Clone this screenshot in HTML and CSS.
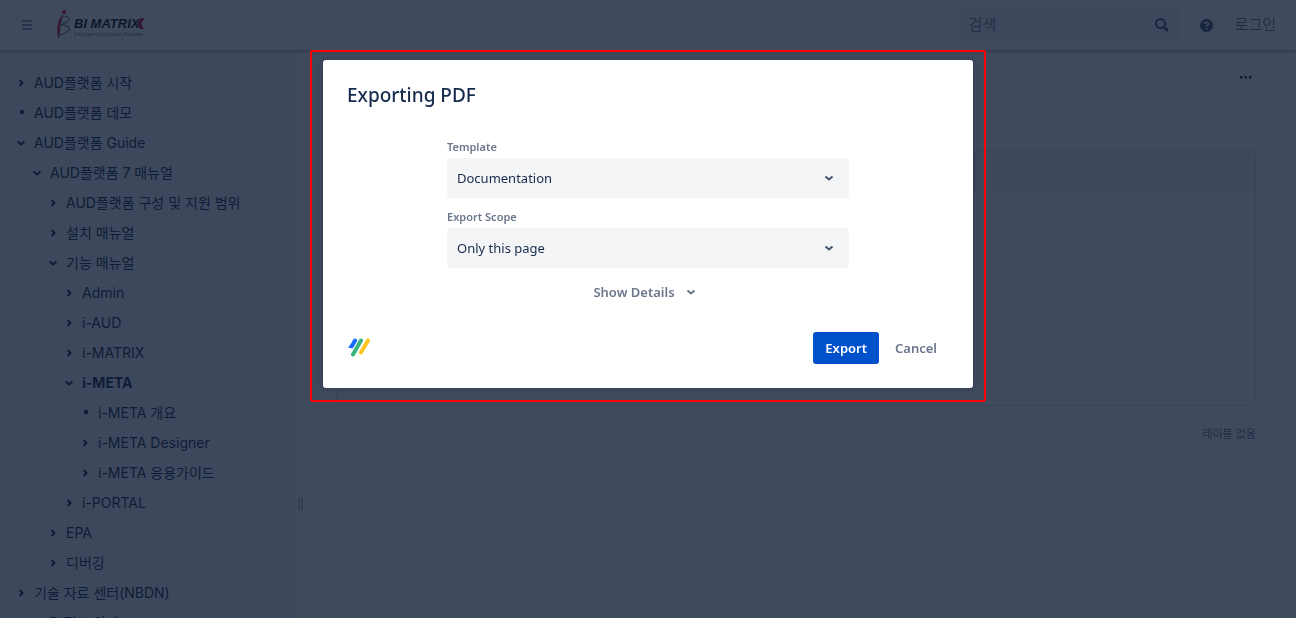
FILE: index.html
```html
<!DOCTYPE html>
<html lang="ko">
<head>
    <meta charset="UTF-8">
    <meta name="viewport" content="width=device-width, initial-scale=1.0">
    <title>i-META - BI MATRIX</title>
    <link rel="stylesheet" href="styles.css">
</head>
<body>
    <svg class="sprite" aria-hidden="true">
        <symbol id="right" viewBox="0 0 10 10"><path d="M3.5 2L6.5 5L3.5 8"/></symbol>
        <symbol id="down" viewBox="0 0 10 10"><path d="M1.500 3.500L5 6.500L8.500 3.500"/></symbol>
        <symbol id="dot" viewBox="0 0 10 10"><circle cx="6" cy="4" r="2.2"/></symbol>
    </svg>

    <header class="header">
        <button class="icon-button" type="button" aria-label="메뉴">
            <svg width="10" height="10" viewBox="0 0 10 10"><path d="M0 1H10M0 5H10M0 9H10" stroke="#6b778c" stroke-width="1.500"/></svg>
        </button>
        <a class="logo" href="#">
            <svg width="16" height="30" viewBox="0 0 16 30" fill="none">
                <circle cx="8" cy="2" r="2" fill="#c0102c"/>
                <path d="M7 5C2 10 1 18 2.500 28C4 20 3.500 12 7 5Z" fill="#c0102c" stroke="#c0102c"/>
                <path d="M6 6C11 6 16 8 11 12L5 15C12 15 16 18 11 22C8 24 4 25 1 26" stroke="#8a8f99" stroke-width="1.500"/>
            </svg>
            <span class="logo-text">
                <span class="logo-name">BI MATRIX<svg class="logo-mark" width="8" height="11" viewBox="0 0 8 11"><path d="M4 0H8L4 5.500L7 11H3L0 5.500Z" fill="#c0102c"/></svg></span>
                <span class="logo-slogan">Intelligence Solution Provider</span>
            </span>
        </a>
        <form class="search">
            <input class="search-input" type="search" placeholder="검색" aria-label="검색">
            <button class="icon-button" type="button" aria-label="검색">
                <svg width="14" height="14" viewBox="0 0 14 14" fill="none" stroke="#42526e" stroke-width="2"><circle cx="5.500" cy="5.500" r="4.500"/><path d="M9 9L13 13" stroke-width="2.500"/></svg>
            </button>
        </form>
        <button class="icon-button" type="button" aria-label="도움말">
            <svg width="13" height="13" viewBox="0 0 13 13"><circle cx="6.500" cy="6.500" r="6.500" fill="#42526e"/><path d="M4.500 5C4.500 2.500 8.500 2.500 8.500 5C8.500 6.300 6.500 6.300 6.500 7.800M6.500 9V10.500" fill="none" stroke="#fff" stroke-width="1.500"/></svg>
        </button>
        <a class="login" href="#">로그인</a>
    </header>

    <div class="page">
        <nav class="sidebar">
            <ul class="tree">
                <li><a href="#"><svg><use href="#right"/></svg>AUD플랫폼 시작</a></li>
                <li><a href="#"><svg><use href="#dot"/></svg>AUD플랫폼 데모</a></li>
                <li><a href="#"><svg><use href="#down"/></svg>AUD플랫폼 Guide</a>
                    <ul>
                        <li><a href="#"><svg><use href="#down"/></svg>AUD플랫폼 7 매뉴얼</a>
                            <ul>
                                <li><a href="#"><svg><use href="#right"/></svg>AUD플랫폼 구성 및 지원 범위</a></li>
                                <li><a href="#"><svg><use href="#right"/></svg>설치 매뉴얼</a></li>
                                <li><a href="#"><svg><use href="#down"/></svg>기능 매뉴얼</a>
                                    <ul>
                                        <li><a href="#"><svg><use href="#right"/></svg>Admin</a></li>
                                        <li><a href="#"><svg><use href="#right"/></svg>i-AUD</a></li>
                                        <li><a href="#"><svg><use href="#right"/></svg>i-MATRIX</a></li>
                                        <li><a class="current" href="#"><svg><use href="#down"/></svg>i-META</a>
                                            <ul>
                                                <li><a href="#"><svg><use href="#dot"/></svg>i-META 개요</a></li>
                                                <li><a href="#"><svg><use href="#right"/></svg>i-META Designer</a></li>
                                                <li><a href="#"><svg><use href="#right"/></svg>i-META 응용가이드</a></li>
                                            </ul>
                                        </li>
                                        <li><a href="#"><svg><use href="#right"/></svg>i-PORTAL</a></li>
                                    </ul>
                                </li>
                                <li><a href="#"><svg><use href="#right"/></svg>EPA</a></li>
                                <li><a href="#"><svg><use href="#right"/></svg>디버깅</a></li>
                            </ul>
                        </li>
                    </ul>
                </li>
                <li><a href="#"><svg><use href="#right"/></svg>기술 자료 센터(NBDN)</a></li>
                <li><a href="#"><svg><use href="#right"/></svg>교육 정보 안내</a></li>
            </ul>
        </nav>
        <div class="splitter"><span class="grip"></span></div>
        <main class="content">
            <button class="icon-button more" type="button" aria-label="더 보기">
                <svg width="12" height="3" viewBox="0 0 12 3" fill="#172b4d"><path d="M0 0H2.500V2.500H0ZM4.500 0H7V2.500H4.500ZM9 0H11.500V2.500H9Z"/></svg>
            </button>
            <section class="panel">
                <div class="panel-header"></div>
            </section>
            <p class="labels">레이블 없음</p>
        </main>
    </div>

    <div class="blanket">
        <div class="highlight">
            <form class="dialog" role="dialog" aria-labelledby="dialogTitle">
                <h1 class="dialog-title" id="dialogTitle">Exporting PDF</h1>
                <div class="fields">
                    <label class="field-label" for="template">Template</label>
                    <div class="select-wrap">
                        <select class="select" id="template">
                            <option>Documentation</option>
                        </select>
                        <svg class="chevron" width="10" height="10"><use href="#down"/></svg>
                    </div>
                    <label class="field-label" for="scope">Export Scope</label>
                    <div class="select-wrap">
                        <select class="select" id="scope">
                            <option>Only this page</option>
                        </select>
                        <svg class="chevron" width="10" height="10"><use href="#down"/></svg>
                    </div>
                    <button class="button details" type="button">Show Details <svg class="details-icon"><use href="#down"/></svg></button>
                </div>
                <div class="dialog-footer">
                    <svg class="vendor" width="24" height="20" viewBox="0 0 24 20" fill="none" stroke-linecap="round" stroke-width="4">
                        <path d="M8 2.500L5 8" stroke="#1769ff"/>
                        <path d="M1 9.500L4 6L6 10.500Z" fill="#1769ff"/>
                        <path d="M14 2.500L6 16.500" stroke="#36b37e"/>
                        <path d="M21 2.500L14 14.500" stroke="#ffc420"/>
                    </svg>
                    <button class="button primary" type="submit">Export</button>
                    <button class="button" type="button">Cancel</button>
                </div>
            </form>
        </div>
    </div>
</body>
</html>
```
FILE: styles.css
```css
* {
    box-sizing: border-box;
}

body {
    margin: 0;
    height: 100vh;
    overflow: hidden;
    display: flex;
    flex-direction: column;
    background-color: #fff;
    color: #172b4d;
    font: 14px/20px Inter, "Noto Sans CJK KR", sans-serif;
}

a {
    color: inherit;
    text-decoration: none;
}

button {
    font: inherit;
    border: 0;
    background: none;
    padding: 0;
}

.sprite {
    display: none;
}

.icon-button {
    display: flex;
}

/* header */

.header {
    display: flex;
    align-items: center;
    flex: none;
    height: 50px;
    padding: 0 20px 0 22px;
    box-shadow: 0 1px 4px rgba(0,0,0,0.4);
    z-index: 1;
}

.logo {
    display: flex;
    align-items: center;
    gap: 2px;
    margin: 0 auto 0 24px;
}

.logo-text {
    display: flex;
    flex-direction: column;
    padding-top: 4px;
}

.logo-name {
    display: flex;
    align-items: center;
    font: italic bold 13px/14px "Liberation Sans", sans-serif;
    color: #111;
}

.logo-mark {
    margin-left: -2px;
}

.logo-slogan {
    font: 5px/7px "Noto Sans", sans-serif;
    color: #6b778c;
}

.search {
    display: flex;
    align-items: center;
    width: 220px;
    height: 34px;
    margin-right: 21px;
    padding: 0 10px;
    border-radius: 3px;
    background-color: #f4f5f7;
}

.search-input {
    flex: 1;
    min-width: 0;
    border: 0;
    padding: 0;
    background: none;
    font: inherit;
    font-size: 15px;
}

.search-input::placeholder {
    color: #7a869a;
}

.login {
    margin-left: 22px;
    font-size: 15px;
    font-weight: 300;
    color: #42526e;
}

/* page tree */

.page {
    display: flex;
    flex: 1;
    min-height: 0;
}

.sidebar {
    flex: 0 0 296px;
    padding: 18px 16px;
    overflow: hidden;
    background-color: #f4f5f7;
}

.tree,
.tree ul {
    list-style: none;
    margin: 0;
    padding: 0;
}

.tree ul {
    padding-left: 16px;
}

.tree a {
    display: flex;
    align-items: center;
    gap: 8px;
    height: 30px;
    white-space: nowrap;
}

.tree svg {
    width: 10px;
    height: 10px;
}

.tree .current {
    font-weight: bold;
}

#right path,
#down path {
    fill: none;
    stroke: currentColor;
    stroke-width: 2;
}

#dot {
    fill: currentColor;
}

.splitter {
    display: flex;
    align-items: flex-start;
    flex: 0 0 10px;
    padding: 448px 2px 0;
}

.grip {
    width: 5px;
    height: 12px;
    border: solid #c1c7d0;
    border-width: 0 2px;
}

/* content */

.content {
    flex: 1;
    display: flex;
    flex-direction: column;
    padding: 26px 40px 0 30px;
}

.more {
    align-self: flex-end;
    margin-right: 4px;
}

.panel {
    height: 256px;
    margin-top: 71px;
    border: 1px solid #dfe1e6;
    border-radius: 3px;
}

.panel-header {
    height: 43px;
    background-color: #f4f5f7;
}

.labels {
    margin: 18px 0 0;
    text-align: right;
    font-size: 11px;
    color: #6b778c;
}

/* export dialog */

.blanket {
    position: fixed;
    inset: 0;
    z-index: 2;
    display: flex;
    justify-content: center;
    align-items: flex-start;
    padding-top: 50px;
    background-color: rgba(13,26,50,0.79);
    font: 13px/20px "Noto Sans", sans-serif;
}

.highlight {
    width: 676px;
    padding: 8px 11px 12px;
    border: 2px solid #f00;
    border-radius: 3px;
}

.dialog {
    padding: 24px;
    border-radius: 3px;
    background-color: #fff;
    box-shadow: 0 0 8px rgba(9,30,66,0.3);
}

.dialog-title {
    margin: 0 0 32px;
    font-size: 19px;
    line-height: 22px;
    font-weight: 500;
}

.fields {
    display: flex;
    flex-direction: column;
    width: 402px;
    margin: 0 auto 24px;
}

.field-label {
    padding: 1px 0 3px;
    color: #6b778c;
    font-size: 11px;
    line-height: 16px;
    font-weight: 600;
}

.select-wrap {
    position: relative;
    margin-bottom: 10px;
}

.select {
    display: block;
    appearance: none;
    width: 100%;
    height: 40px;
    padding: 0 10px;
    border: 0;
    border-radius: 3px;
    background-color: #f4f5f7;
    color: #172b4d;
    font: inherit;
}

.chevron {
    position: absolute;
    top: 15px;
    right: 15px;
    color: #42526e;
    pointer-events: none;
}

.button {
    height: 32px;
    padding: 0 12px;
    border-radius: 3px;
    color: #6b778c;
    font-weight: 600;
}

.details {
    align-self: center;
    display: flex;
    align-items: center;
    gap: 4px;
    margin-top: -2px;
    padding: 0;
}

.details-icon {
    box-sizing: content-box;
    width: 10px;
    height: 10px;
    padding: 7px;
}

.primary {
    background-color: #0052cc;
    color: #fff;
}

.dialog-footer {
    display: flex;
    align-items: center;
    gap: 4px;
}

.vendor {
    margin-right: auto;
}
```
